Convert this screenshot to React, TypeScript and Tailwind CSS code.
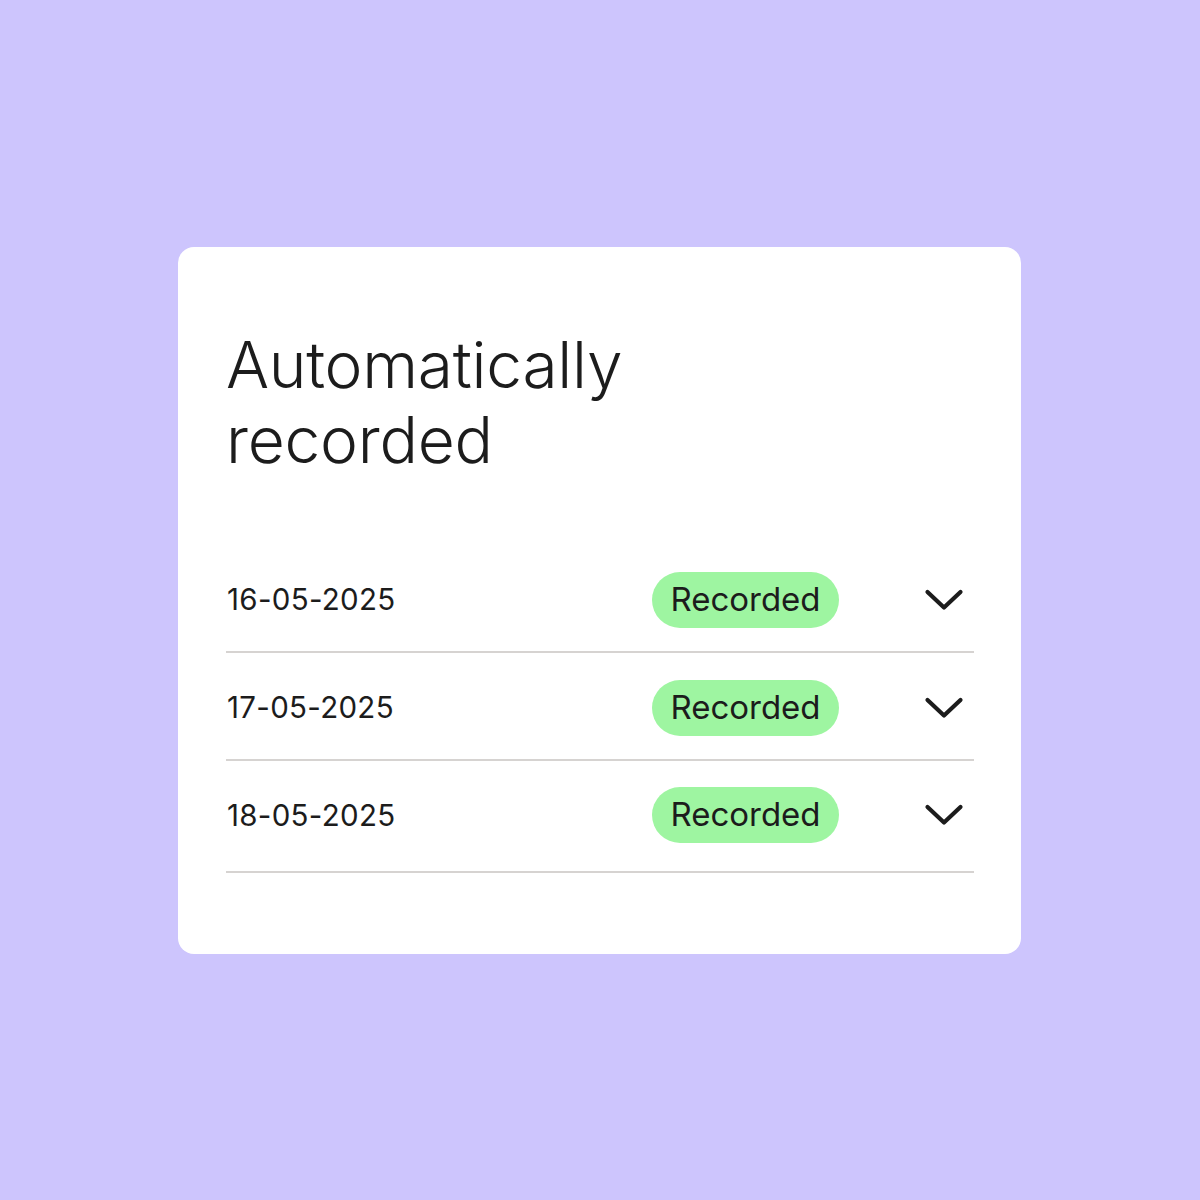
import React from "react";

const rows = ["16-05-2025", "17-05-2025", "18-05-2025"];

function Chevron() {
  return (
    <svg width="40" height="24" viewBox="0 0 40 24" fill="none">
      <path d="M3.5 4 L20 19.5 L36.5 4" stroke="#1c1c1c" strokeWidth="4.2" strokeLinecap="round" strokeLinejoin="round" />
    </svg>
  );
}

export default function App() {
  return (
    <div className="w-[1200px] h-[1200px] bg-[#cdc5fd] flex items-start justify-center pt-[247px]" style={{ fontFamily: "Inter, 'Noto Sans', sans-serif" }}>
      <div className="w-[843px] h-[707px] bg-white rounded-[16px] pl-[48px] pr-[47px] pt-[80px] ml-[-1px]">
        <h1 className="text-[64px] leading-[75px] font-light text-[#1c1c1c] tracking-[-0.004em]">
          Automatically
          <br />
          recorded
        </h1>
        <div className="mt-[68px]">
          {rows.map((d, i) => (
            <div
              key={d}
              className={
                i === 2
                  ? "flex items-center h-[112px] pb-[2px] border-b-2 border-[#d6d3d1]"
                  : "flex items-center h-[108px] pt-[3px] border-b-2 border-[#d6d3d1]"
              }
            >
              <div className="flex-1 text-[29.5px] text-[#1c1c1c] tracking-[0.01em] pl-[1px]">{d}</div>
              <div className="w-[187px] h-[56px] rounded-full bg-[#9ef5a1] flex items-center justify-center text-[33px] text-[#1c1c1c]">
                Recorded
              </div>
              <div className="w-[135px] flex justify-end pr-[10px]">
                <Chevron />
              </div>
            </div>
          ))}
        </div>
      </div>
    </div>
  );
}
